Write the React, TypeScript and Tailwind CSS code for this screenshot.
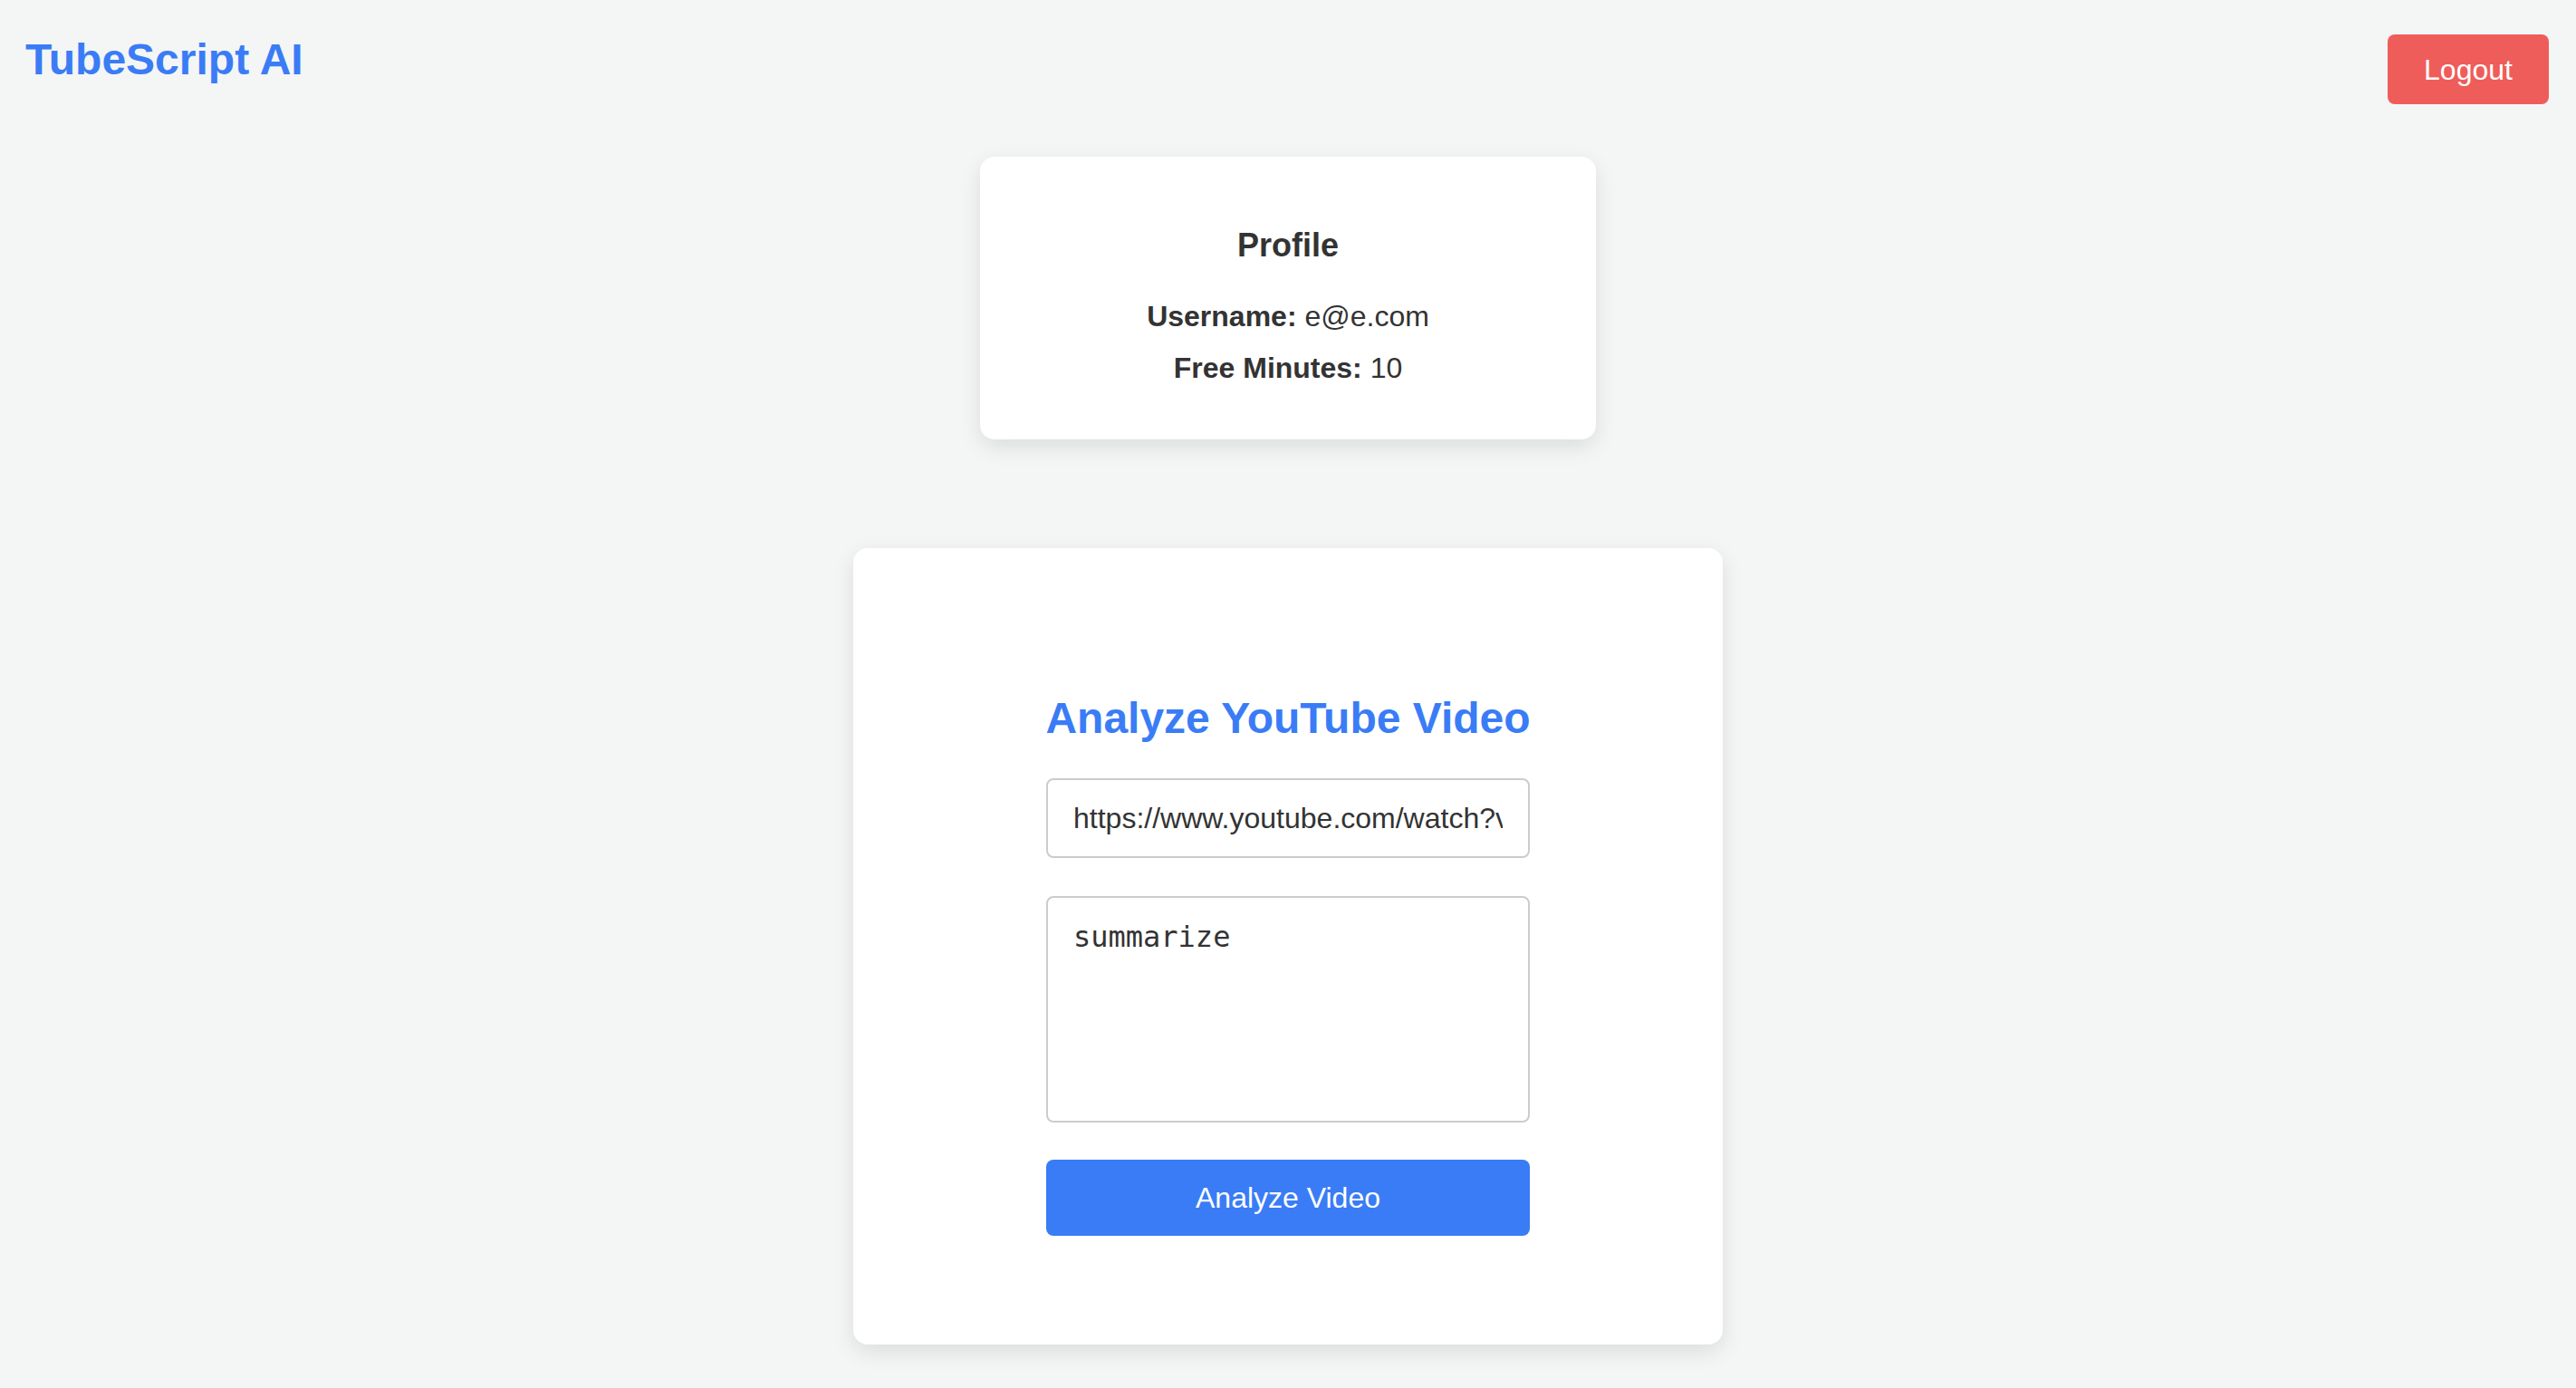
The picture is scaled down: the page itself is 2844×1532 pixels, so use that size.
import React, { useState } from 'react';

export default function App() {
  const [url, setUrl] = useState('https://www.youtube.com/watch?v=dQw4w9WgXcQ');
  const [prompt, setPrompt] = useState('summarize');

  return (
    <div className="min-h-screen bg-[#f4f5f5] text-[#333] font-['Liberation_Sans',Arial,sans-serif]">
      {/* header */}
      <header className="flex justify-between items-start pt-[38px] pl-[28px] pr-[30px]">
        <h1 className="text-[48px] leading-[56px] font-bold text-[#3a7cf6]">TubeScript AI</h1>
        <button className="w-[178px] h-[77px] rounded-[8px] bg-[#ee5d59] text-white text-[32px]">
          Logout
        </button>
      </header>

      <main className="flex flex-col items-center pb-[60px]">
        {/* profile */}
        <div className="mt-[58px] w-[680px] h-[312px] bg-white rounded-[16px] shadow-[0_8px_24px_rgba(0,0,0,0.1)] flex flex-col items-center pt-[77px]">
          <h3 className="text-[36px] leading-[42px] font-bold">Profile</h3>
          <p className="mt-[37px] text-[32px] leading-[40px]">
            <strong className="font-bold">Username:</strong> e@e.com
          </p>
          <p className="mt-[17px] text-[32px] leading-[40px]">
            <strong className="font-bold">Free Minutes:</strong> 10
          </p>
        </div>

        {/* analyze form */}
        <div className="mt-[120px] w-[960px] bg-white rounded-[16px] shadow-[0_8px_24px_rgba(0,0,0,0.1)] flex flex-col items-center pt-[160px] pb-[120px]">
          <h2 className="text-[48px] leading-[56px] font-bold text-[#3a7cf6]">Analyze YouTube Video</h2>
          <form className="w-[534px] flex flex-col" onSubmit={(e) => e.preventDefault()}>
            <input
              type="text"
              value={url}
              onChange={(e) => setUrl(e.target.value)}
              className="mt-[38px] h-[88px] w-full border-2 border-[#cccccc] rounded-[8px] px-[28px] text-[32px] text-[#333] bg-white outline-none font-['Liberation_Sans',Arial,sans-serif]"
            />
            <textarea
              value={prompt}
              onChange={(e) => setPrompt(e.target.value)}
              className="mt-[42px] h-[250px] w-full border-2 border-[#cccccc] rounded-[8px] px-[28px] pt-[24px] text-[32px] leading-[38px] text-[#333] bg-white outline-none resize-none font-['DejaVu_Sans_Mono',monospace]"
            />
            <button
              type="submit"
              className="mt-[41px] h-[84px] w-full rounded-[8px] bg-[#3a7cf6] text-white text-[32px]"
            >
              Analyze Video
            </button>
          </form>
        </div>
      </main>
    </div>
  );
}
